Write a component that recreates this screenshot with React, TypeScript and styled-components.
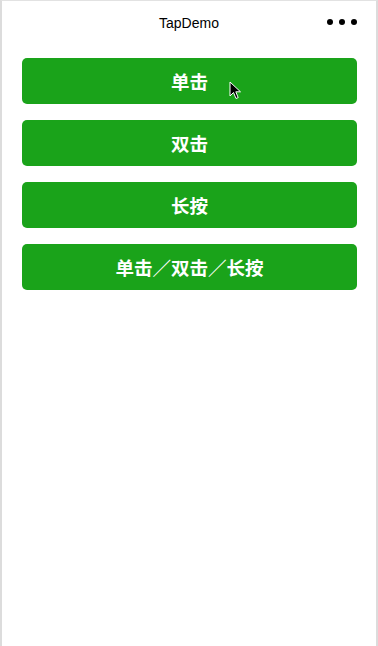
import React from 'react'
import styled, {createGlobalStyle} from 'styled-components'

const GlobalStyle = createGlobalStyle`
    html, body {
        margin: 0;
        padding: 0;
        background: #ffffff;
    }
    body {
        font-family: "Liberation Sans", "Noto Sans CJK SC", sans-serif;
    }
`

const Page = styled.div`
    position: relative;
    box-sizing: border-box;
    width: 378px;
    height: 646px;
    background: #ffffff;
    border-top: 1px solid #e2e2e2;
    border-left: 2px solid #dcdcdc;
    border-right: 2px solid #dcdcdc;
`

const NavBar = styled.div`
    position: relative;
    height: 43px;
    display: flex;
    align-items: center;
    justify-content: center;
`

const Title = styled.div`
    font-size: 14px;
    color: #000000;
`

const MoreDots = styled.div`
    position: absolute;
    right: 19px;
    top: 18px;
    display: flex;
    gap: 6px;
`

const Dot = styled.span`
    width: 6px;
    height: 6px;
    border-radius: 50%;
    background: #000000;
`

const ButtonList = styled.div`
    display: flex;
    flex-direction: column;
    gap: 16px;
    padding: 14px 19px 0 20px;
`

const TapButton = styled.button`
    height: 46px;
    border: none;
    border-radius: 5px;
    background: #1aa31a;
    color: #ffffff;
    font-family: "Noto Sans CJK SC", sans-serif;
    font-size: 18.5px;
    font-weight: 700;
    display: flex;
    align-items: center;
    justify-content: center;
    padding: 0;
`

const Cursor = styled.svg`
    position: absolute;
    left: 229px;
    top: 81px;
    pointer-events: none;
`

export default function App(): React.ReactElement {
    const labels = ['单击', '双击', '长按', '单击／双击／长按']
    return (
        <>
            <GlobalStyle/>
            <Page>
                <NavBar>
                    <Title>TapDemo</Title>
                    <MoreDots>
                        <Dot/>
                        <Dot/>
                        <Dot/>
                    </MoreDots>
                </NavBar>
                <ButtonList>
                    {labels.map((label) => (
                        <TapButton key={label}>{label}</TapButton>
                    ))}
                </ButtonList>
            </Page>
            <Cursor width="14" height="20" viewBox="0 0 14 20">
                <path
                    d="M1 1 L1 15 L4.5 11.5 L7 17.5 L9.2 16.6 L6.8 10.8 L11.5 10.8 Z"
                    fill="#000000"
                    stroke="#ffffff"
                    strokeWidth="1"
                    strokeLinejoin="round"
                />
            </Cursor>
        </>
    )
}
